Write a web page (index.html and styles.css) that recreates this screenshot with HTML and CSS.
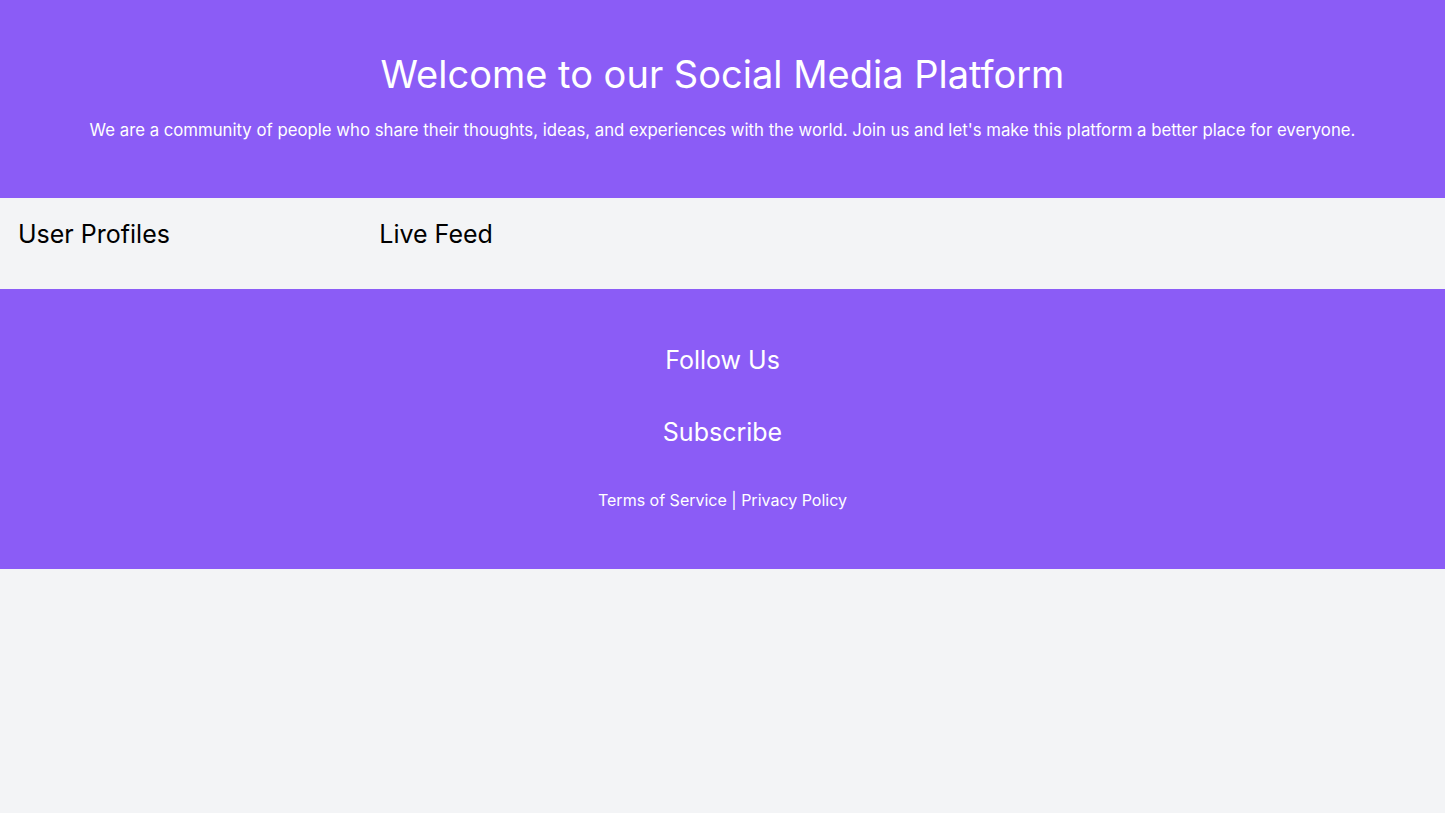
FILE: index.html
```html
<!DOCTYPE html>
<html lang="en">
<head>
    <meta charset="UTF-8">
    <meta name="viewport" content="width=device-width, initial-scale=1.0">
    <title>Social Media Platform</title>
    <link rel="stylesheet" href="styles.css">
</head>
<body>

    <header class="hero">
        <h1>Welcome to our Social Media Platform</h1>
        <p>We are a community of people who share their thoughts, ideas, and experiences with the world. Join us and let's make this platform a better place for everyone.</p>
    </header>

    <main class="content">
        <section class="profiles">
            <h2>User Profiles</h2>
        </section>
        <section class="feed">
            <h2>Live Feed</h2>
        </section>
    </main>

    <footer class="site-footer">
        <h2>Follow Us</h2>
        <h2>Subscribe</h2>
        <p class="legal"><a href="#">Terms of Service</a> | <a href="#">Privacy Policy</a></p>
    </footer>

</body>
</html>
```

FILE: styles.css
```css
body {
    font-family: Inter, 'Liberation Sans', sans-serif;
    margin: 0;
    padding: 0;
    min-height: 100vh;
    background: #F3F4F6;
    color: #000;
}

.hero {
    background: #8B5CF6;
    color: #fff;
    text-align: center;
    padding: 54px 16px 56px;
}

.hero h1 {
    font-size: 38px;
    line-height: 40px;
    font-weight: 400;
    margin: 0;
}

.hero p {
    font-size: 16.75px;
    line-height: 24px;
    margin: 24px 0 0;
}

.content {
    display: flex;
    padding: 4px 0 23px;
}

.content section {
    padding: 16px 16px 16px 18px;
}

.content h2 {
    font-size: 25px;
    line-height: 32px;
    font-weight: 400;
    margin: 0;
}

.profiles {
    width: 25%;
    box-sizing: border-box;
}

.feed {
    flex: 1;
}

.site-footer {
    background: #8B5CF6;
    color: #fff;
    text-align: center;
    padding: 55px 16px 57px;
}

.site-footer h2 {
    font-size: 25px;
    line-height: 32px;
    font-weight: 400;
    margin: 0 0 40px;
}

.legal {
    font-size: 16px;
    line-height: 24px;
    margin: 1px 0 0;
}

.legal a {
    color: #fff;
    text-decoration: none;
}
```
